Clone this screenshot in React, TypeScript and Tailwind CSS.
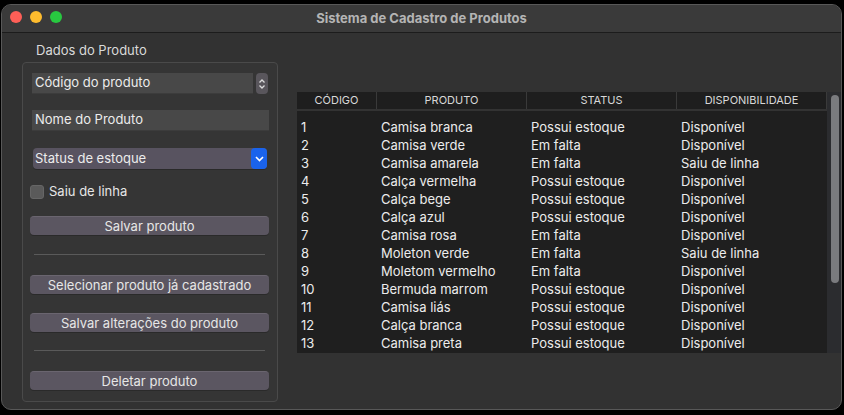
import React from "react";

const rows: [string, string, string, string][] = [
  ["1", "Camisa branca", "Possui estoque", "Disponível"],
  ["2", "Camisa verde", "Em falta", "Disponível"],
  ["3", "Camisa amarela", "Em falta", "Saiu de linha"],
  ["4", "Calça vermelha", "Possui estoque", "Disponível"],
  ["5", "Calça bege", "Possui estoque", "Disponível"],
  ["6", "Calça azul", "Possui estoque", "Disponível"],
  ["7", "Camisa rosa", "Em falta", "Disponível"],
  ["8", "Moleton verde", "Em falta", "Saiu de linha"],
  ["9", "Moletom vermelho", "Em falta", "Disponível"],
  ["10", "Bermuda marrom", "Possui estoque", "Disponível"],
  ["11", "Camisa liás", "Possui estoque", "Disponível"],
  ["12", "Calça branca", "Possui estoque", "Disponível"],
  ["13", "Camisa preta", "Possui estoque", "Disponível"],
];

function Btn({ label }: { label: string }) {
  return (
    <div className="h-[19px] w-[239px] rounded-[4px] bg-[#5b5661] border-t border-[#6a656f] shadow-[0_1px_0_#2a2a2a] flex items-center justify-center text-[13px] text-[#e6e6e6] leading-none">
      {label}
    </div>
  );
}

function Sep() {
  return <div className="h-px w-[231px] bg-[#5a5a5a] ml-[4px]" />;
}

export default function App() {
  return (
    <div
      className="w-[844px] h-[415px] bg-black pt-[4px] pl-[1px] overflow-hidden"
      style={{ fontFamily: "Inter, 'Liberation Sans', sans-serif" }}
    >
      <div className="w-[841px] h-[406px] rounded-[10px] border border-[#585858] bg-[#323232] overflow-hidden flex flex-col">
        {/* title bar */}
        <div className="h-[28px] bg-[#3a3a3a] border-b border-[#1c1c1c] relative flex items-center justify-center shrink-0">
          <div className="absolute left-[8px] top-[6px] flex gap-[8px]">
            <div className="w-[12px] h-[12px] rounded-full bg-[#fe5f57]" />
            <div className="w-[12px] h-[12px] rounded-full bg-[#febc2e]" />
            <div className="w-[12px] h-[12px] rounded-full bg-[#28c840]" />
          </div>
          <span className="text-[13px] font-bold text-[#b4b4b4]">Sistema de Cadastro de Produtos</span>
        </div>

        {/* body */}
        <div className="flex flex-1">
          {/* left */}
          <div className="pl-[20px] w-[277px] shrink-0">
            <div className="h-[29px] pl-[14px] pt-[9px] text-[13px] text-[#dadada] leading-[16px]">Dados do Produto</div>
            <div className="w-[256px] h-[340px] rounded-[4px] border border-[#4a4a4a] bg-[#353535] pl-[9px] pt-[10px] flex flex-col">
              <div className="flex items-center">
                <div className="h-[21px] w-[221px] bg-[#484848] border-b border-[#3c3c3c] pl-[3px] flex items-center text-[13px] text-[#ececec]">
                  Código do produto
                </div>
                <div className="ml-[3px] w-[12px] h-[21px] rounded-[4px] bg-[#59565c] flex items-center justify-center">
                  <svg width="8" height="12" viewBox="0 0 8 12" fill="none" stroke="#dcdcdc" strokeWidth="1.3">
                    <path d="M1.5 4.5 L4 2 L6.5 4.5" />
                    <path d="M1.5 7.5 L4 10 L6.5 7.5" />
                  </svg>
                </div>
              </div>
              <div className="mt-[16px] h-[21px] w-[237px] bg-[#484848] border-b border-[#3c3c3c] pl-[3px] flex items-center text-[13px] text-[#ececec]">
                Nome do Produto
              </div>
              <div className="mt-[17px] ml-px h-[21px] w-[234px] rounded-[4px] bg-[#585360] flex items-center justify-between shadow-[0_1px_0_#2a2a2a]">
                <span className="pl-[2px] text-[13px] text-[#ececec]">Status de estoque</span>
                <div className="w-[16px] h-[21px] rounded-[4px] bg-[#1a63ec] flex items-center justify-center">
                  <svg width="9" height="6" viewBox="0 0 9 6" fill="none" stroke="#fff" strokeWidth="1.6">
                    <path d="M1 1 L4.5 4.5 L8 1" />
                  </svg>
                </div>
              </div>
              <div className="mt-[15px] -ml-[2px] flex items-center h-[16px]">
                <div className="w-[14px] h-[14px] rounded-[3px] bg-[#5a5a5a] border border-[#666]" />
                <span className="ml-[5px] text-[13px] text-[#e6e6e6]">Saiu de linha</span>
              </div>
              <div className="mt-[16px] -ml-[2px] flex flex-col">
                <Btn label="Salvar produto" />
                <div className="h-[19px]" />
                <Sep />
                <div className="h-[20px]" />
                <Btn label="Selecionar produto já cadastrado" />
                <div className="h-[19px]" />
                <Btn label="Salvar alterações do produto" />
                <div className="h-[18px]" />
                <Sep />
                <div className="h-[20px]" />
                <Btn label="Deletar produto" />
              </div>
            </div>
          </div>

          {/* right: table */}
          <div className="pt-[59px] pl-[18px]">
            <div className="flex">
              <div className="w-[530px] h-[261px] bg-[#1f1f1f] flex flex-col">
                <div className="h-[21px] flex items-center border-b-2 border-[#333] text-[11px] text-[#d8d8d8] bg-[#1e1e1e]">
                  <div className="w-[80px] text-center border-r border-[#3a3a3a]">CÓDIGO</div>
                  <div className="w-[150px] text-center border-r border-[#3a3a3a]">PRODUTO</div>
                  <div className="w-[150px] text-center border-r border-[#3a3a3a]">STATUS</div>
                  <div className="w-[150px] text-center border-r border-[#3a3a3a]">DISPONIBILIDADE</div>
                </div>
                <div className="pt-[8px]">
                  {rows.map((r) => (
                    <div key={r[0]} className="h-[18px] flex items-center text-[13px] text-[#ececec]">
                      <div className="w-[84px] pl-[4px]">{r[0]}</div>
                      <div className="w-[150px]">{r[1]}</div>
                      <div className="w-[150px]">{r[2]}</div>
                      <div className="w-[146px]">{r[3]}</div>
                    </div>
                  ))}
                </div>
              </div>
              <div className="w-[14px] h-[261px] bg-[#2b2c2f] pt-[3px] pl-[4px]">
                <div className="w-[8px] h-[188px] rounded-full bg-[#7a7b7e]" />
              </div>
            </div>
          </div>
        </div>
      </div>
    </div>
  );
}
